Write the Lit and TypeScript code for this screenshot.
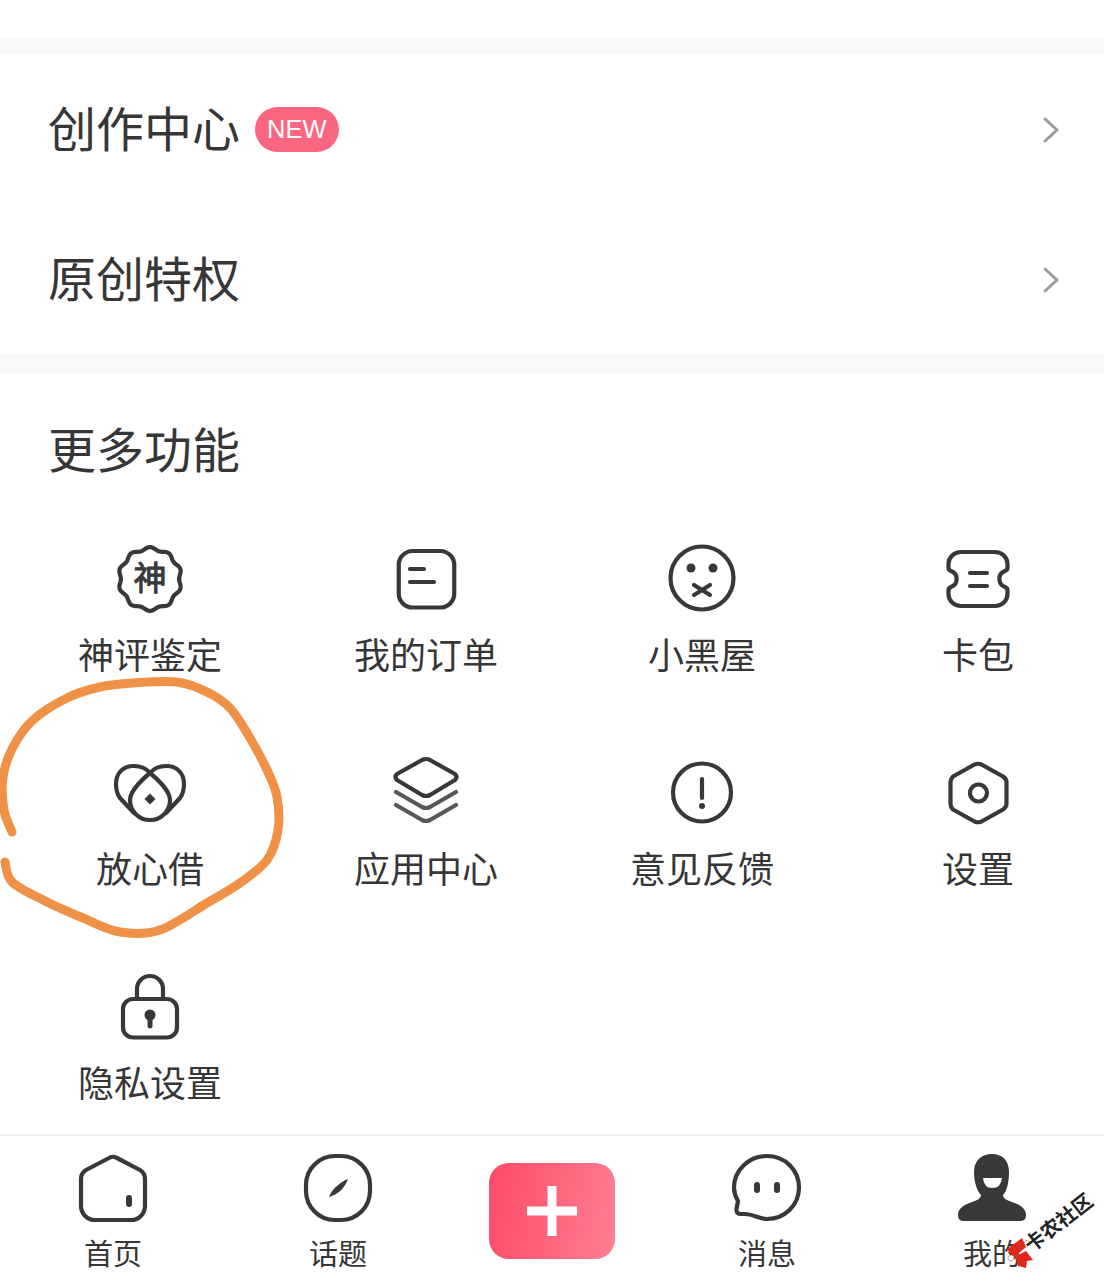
import {css, html, LitElement, svg} from 'lit';
import {customElement} from 'lit/decorators.js';

// wavy badge outline behind the 神 icon
function scallopPath(cx: number, cy: number, r: number, amp: number, lobes: number) {
    const pts: string[] = [];
    for (let i = 0; i < 180; i++) {
        const a = (i / 180) * Math.PI * 2;
        const rr = r + amp * Math.cos(lobes * a);
        pts.push(`${(cx + rr * Math.sin(a)).toFixed(2)} ${(cy - rr * Math.cos(a)).toFixed(2)}`);
    }
    return `M${pts.join('L')}Z`;
}

// catmull-rom through the hand drawn points
function smoothPath(p: number[][]) {
    let d = `M${p[0][0]} ${p[0][1]}`;
    for (let i = 0; i < p.length - 1; i++) {
        const a = p[Math.max(i - 1, 0)], b = p[i], c = p[i + 1], e = p[Math.min(i + 2, p.length - 1)];
        const c1 = [b[0] + (c[0] - a[0]) / 6, b[1] + (c[1] - a[1]) / 6];
        const c2 = [c[0] - (e[0] - b[0]) / 6, c[1] - (e[1] - b[1]) / 6];
        d += `C${c1[0].toFixed(1)} ${c1[1].toFixed(1)} ${c2[0].toFixed(1)} ${c2[1].toFixed(1)} ${c[0]} ${c[1]}`;
    }
    return d;
}

const SCRIBBLE = [
    [12, 832], [4, 810], [3, 777], [13, 747], [33, 720], [67, 698], [100, 687], [133, 683],
    [177, 682], [207, 692], [230, 708], [250, 738], [267, 770], [277, 797], [278, 830],
    [267, 860], [240, 883], [207, 903], [160, 930], [120, 932], [83, 918], [43, 900],
    [12, 882], [5, 862],
];

const ICONS: Record<string, unknown> = {
    shen: svg`
        <path d=${scallopPath(40, 41, 30.5, 1.4, 10)}/>
        <text class="glyph" x="40" y="52" text-anchor="middle">神</text>`,
    order: svg`
        <rect x="12.750" y="13" width="55.500" height="56.500" rx="14"/>
        <path d="M24 31H38M24 44H48"/>`,
    face: svg`
        <circle cx="40" cy="40" r="31.500"/>
        <circle class="fill nostroke" cx="29" cy="30" r="4.500"/>
        <circle class="fill nostroke" cx="51" cy="30" r="4.500"/>
        <path d="M32 47L48 57M48 47L32 57"/>`,
    ticket: svg`
        <path d="M23 14H57A12.500 12 0 0 1 69.500 26V30Q69.500 32 67 33A8.500 8.500 0 0 0 67 49Q69.500 50 69.500 52V56A12.500 12 0 0 1 57 68H23A12.500 12 0 0 1 10.500 56V52Q10.500 50 13 49A8.500 8.500 0 0 0 13 33Q10.500 32 10.500 30V26A12.500 12 0 0 1 23 14Z"/>
        <path d="M32 35H49M32 48H49"/>`,
    heart: svg`
        <path d="M24 61L10 46C7 42 6 37 6 32C6 21 13 14 24 14C31 14 36 16 40 21C44 16 49 14 56 14C67 14 74 21 74 32C74 37 73 42 70 46L56 61"/>
        <path d="M40 21C35 25 20 38 20 48A20 20 0 0 0 60 48C60 38 45 25 40 21Z"/>
        <path class="fill nostroke" d="M40 41.500L45.500 47L40 52.500L34.500 47Z"/>`,
    layers: svg`
        <path d="M36 8Q40 6 44 8L69 22Q72 25 69 28L44 43Q40 45 36 43L11 28Q8 25 11 22Z"/>
        <path class="soft" d="M10 40L36 55Q40 57 44 55L70 40M10 53L36 68Q40 70 44 68L70 53"/>`,
    notice: svg`
        <circle cx="40" cy="40.500" r="29"/>
        <path d="M40 27V46"/>
        <circle class="fill nostroke" cx="40" cy="54" r="3"/>`,
    hex: svg`
        <path d="M36.500 12.500Q40 11 43.500 12.500L65 24.500Q68.500 27 68.500 30V52Q68.500 55 65 57.500L43.500 69.500Q40 71 36.500 69.500L15 57.500Q12.500 55 12.500 52V30Q12.500 27 15 24.500Z"/>
        <circle cx="40.500" cy="41" r="8.500"/>`,
    lock: svg`
        <rect x="13" y="33" width="54" height="38.500" rx="10"/>
        <path d="M27 33V23A13 13 0 0 1 53 23V33"/>
        <circle class="fill nostroke" cx="40" cy="49" r="5.500"/>
        <path class="fill nostroke" d="M37.500 50H42.500V61Q40 64 37.500 61Z"/>`,
    home: svg`
        <path d="M37 9.500Q40 8 43 9.500L67 22Q72 25 72 31V58A14 14 0 0 1 58 72H22A14 14 0 0 1 8 58V31Q8 25 13 22Z"/>
        <rect class="fill nostroke" x="53" y="47" width="6" height="12" rx="3"/>`,
    topic: svg`
        <rect x="8" y="8" width="64" height="64" rx="29"/>
        <path class="fill nostroke" d="M50 31C46 42 38 47 31 49C34 41 42 34 50 31Z"/>`,
    chat: svg`
        <path d="M40 8C58 8 72 22 72 39.500C72 57 58 71 40 71C32 71 26 66 18 66L14 66Q9 66 9.500 61L11 53C8 48 7 44 7 39.500C7 22 22 8 40 8Z"/>
        <rect class="fill nostroke" x="27" y="34" width="6" height="11" rx="3"/>
        <rect class="fill nostroke" x="47" y="34" width="6" height="11" rx="3"/>`,
    mine: svg`
        <path class="fill nostroke" d="M40 6C50 6 57 12 57 24C57 34 55 43 51 47C51 50 54 52 60 54C69 57 74 61 74 67Q74 73 68 73H12Q6 73 6 67C6 61 11 57 20 54C26 52 29 50 29 47C25 43 22 34 22 24C22 12 30 6 40 6Z"/>
        <path class="hole nostroke" d="M31 30H50Q49 40 40 40Q32 40 31 30Z"/>`,
};

const FEATURES = [
    ['shen', '神评鉴定'], ['order', '我的订单'], ['face', '小黑屋'], ['ticket', '卡包'],
    ['heart', '放心借'], ['layers', '应用中心'], ['notice', '意见反馈'], ['hex', '设置'],
    ['lock', '隐私设置'],
];

const TABS = [['home', '首页'], ['topic', '话题'], null, ['chat', '消息'], ['mine', '我的']];

@customElement("app-root")
export default class AppRoot extends LitElement {
    static styles = css`
        :host {
            display: block;
            position: relative;
            width: 1104px;
            height: 1283px;
            overflow: hidden;
            background: #fff;
            color: #363636;
            font-family: "Noto Sans CJK SC", "Noto Sans", sans-serif;
        }

        .top-gap { height: 38px; }
        .band { height: 16px; background: #f8f8f8; }
        .band.wide { height: 19px; }

        .row {
            display: flex;
            align-items: center;
            height: 150px;
            padding: 0 44px 0 48px;
            font-size: 48px;
        }
        .row .name { padding-bottom: 6px; }
        .row .badge {
            margin-left: 15px;
            padding: 0 12px;
            height: 45px;
            line-height: 45px;
            border-radius: 23px;
            background: #fa6680;
            color: #fff;
            font-family: "Liberation Sans", sans-serif;
            font-size: 25.500px;
        }
        .row .chev { margin: 2px 0 0 auto; width: 18px; height: 28px; }
        .chev path { fill: none; stroke: #999; stroke-width: 3; stroke-linecap: round; stroke-linejoin: round; }

        .title {
            padding: 44px 0 61px 48px;
            height: 60px;
            line-height: 60px;
            font-size: 48px;
        }

        .grid {
            display: grid;
            grid-template-columns: repeat(4, 276px);
            row-gap: 72px;
            padding: 0 12px;
            height: 570px;
            align-content: start;
        }
        .cell { display: flex; flex-direction: column; align-items: center; height: 142px; }
        .cell .label { margin-top: 10px; line-height: 50px; font-size: 36px; }

        .ico { width: 80px; height: 80px; display: block; }
        .ico * { fill: none; stroke: #383838; stroke-width: 4.2; stroke-linecap: round; stroke-linejoin: round; }
        .ico .soft { stroke: #585858; }
        .ico .fill { fill: #383838; }
        .ico .hole { fill: #fff; }
        .ico .nostroke { stroke: none; }
        .ico .glyph { fill: #383838; stroke: #383838; stroke-width: 1; font-size: 33px; font-weight: 400; }

        .tabs {
            display: grid;
            grid-template-columns: 226px 224px 204px 226px 224px;
            height: 147px;
            padding-top: 12px;
            box-sizing: border-box;
            border-top: 2px solid #eee;
            margin-top: 26px;
        }
        .tab { display: flex; flex-direction: column; align-items: center; }
        .tab .label { margin-top: 4px; line-height: 40px; font-size: 29px; }
        .add {
            align-self: start;
            justify-self: center;
            width: 126px;
            height: 96px;
            margin-top: 15px;
            border-radius: 20px;
            background: linear-gradient(100deg, #fd4a69, #ff7f90);
            display: flex;
            align-items: center;
            justify-content: center;
        }
        .add svg { width: 50px; height: 50px; }

        /* pen circle someone drew over the screenshot */
        .scribble { position: absolute; left: 0; top: 0; pointer-events: none; }
        .scribble path { fill: none; stroke: #ef9247; stroke-width: 9; stroke-linecap: round; stroke-linejoin: round; }

        .mark { position: absolute; left: 1000px; top: 1186px; width: 104px; height: 90px; }
        .mark svg { position: absolute; left: 3px; top: 50px; width: 32px; height: 34px; }
        .mark span {
            position: absolute;
            left: 18px;
            top: 24px;
            transform: rotate(-38deg);
            font-size: 20px;
            line-height: 24px;
            font-weight: 700;
            color: #222;
            white-space: nowrap;
            text-shadow: 0 0 2px #fff, 0 0 2px #fff;
        }
    `;

    private icon(name: string) {
        return html`<svg class="ico" viewBox="0 0 80 80">${ICONS[name]}</svg>`;
    }

    private chevron() {
        return html`<svg class="chev" viewBox="0 0 18 28"><path d="M3 3L15 14L3 25"/></svg>`;
    }

    render() {
        return html`
            <div class="top-gap"></div>
            <div class="band"></div>
            <div class="row">
                <span class="name">创作中心</span>
                <span class="badge">NEW</span>
                ${this.chevron()}
            </div>
            <div class="row">
                <span class="name">原创特权</span>
                ${this.chevron()}
            </div>
            <div class="band wide"></div>
            <div class="title">更多功能</div>
            <div class="grid">
                ${FEATURES.map(([icon, label]) => html`
                    <div class="cell">
                        ${this.icon(icon)}
                        <div class="label">${label}</div>
                    </div>
                `)}
            </div>
            <div class="tabs">
                ${TABS.map(tab => tab
                    ? html`<div class="tab">${this.icon(tab[0])}<div class="label">${tab[1]}</div></div>`
                    : html`<div class="add"><svg viewBox="0 0 50 50"><path d="M20.500 0H29.500V20.500H50V29.500H29.500V50H20.500V29.500H0V20.500H20.500Z" fill="#fff"/></svg></div>`)}
            </div>
            <svg class="scribble" width="1104" height="1283">
                <path d=${smoothPath(SCRIBBLE)}/>
            </svg>
            <div class="mark">
                <svg viewBox="0 0 32 34">
                    <path d="M4 13L19 2L23 11L16 17L12 24Z" fill="#e0281f"/>
                    <path d="M13 20L23 15L30 24L24 25L23 32L15 30Z" fill="#e0281f"/>
                    <circle cx="24" cy="7" r="2.500" fill="#fff" stroke="#444" stroke-width="0.8" stroke-dasharray="1.500 1"/>
                    <circle cx="8" cy="22" r="3" fill="#fff" stroke="#444" stroke-width="0.8" stroke-dasharray="1.500 1"/>
                </svg>
                <span>卡农社区</span>
            </div>
        `;
    }
}
